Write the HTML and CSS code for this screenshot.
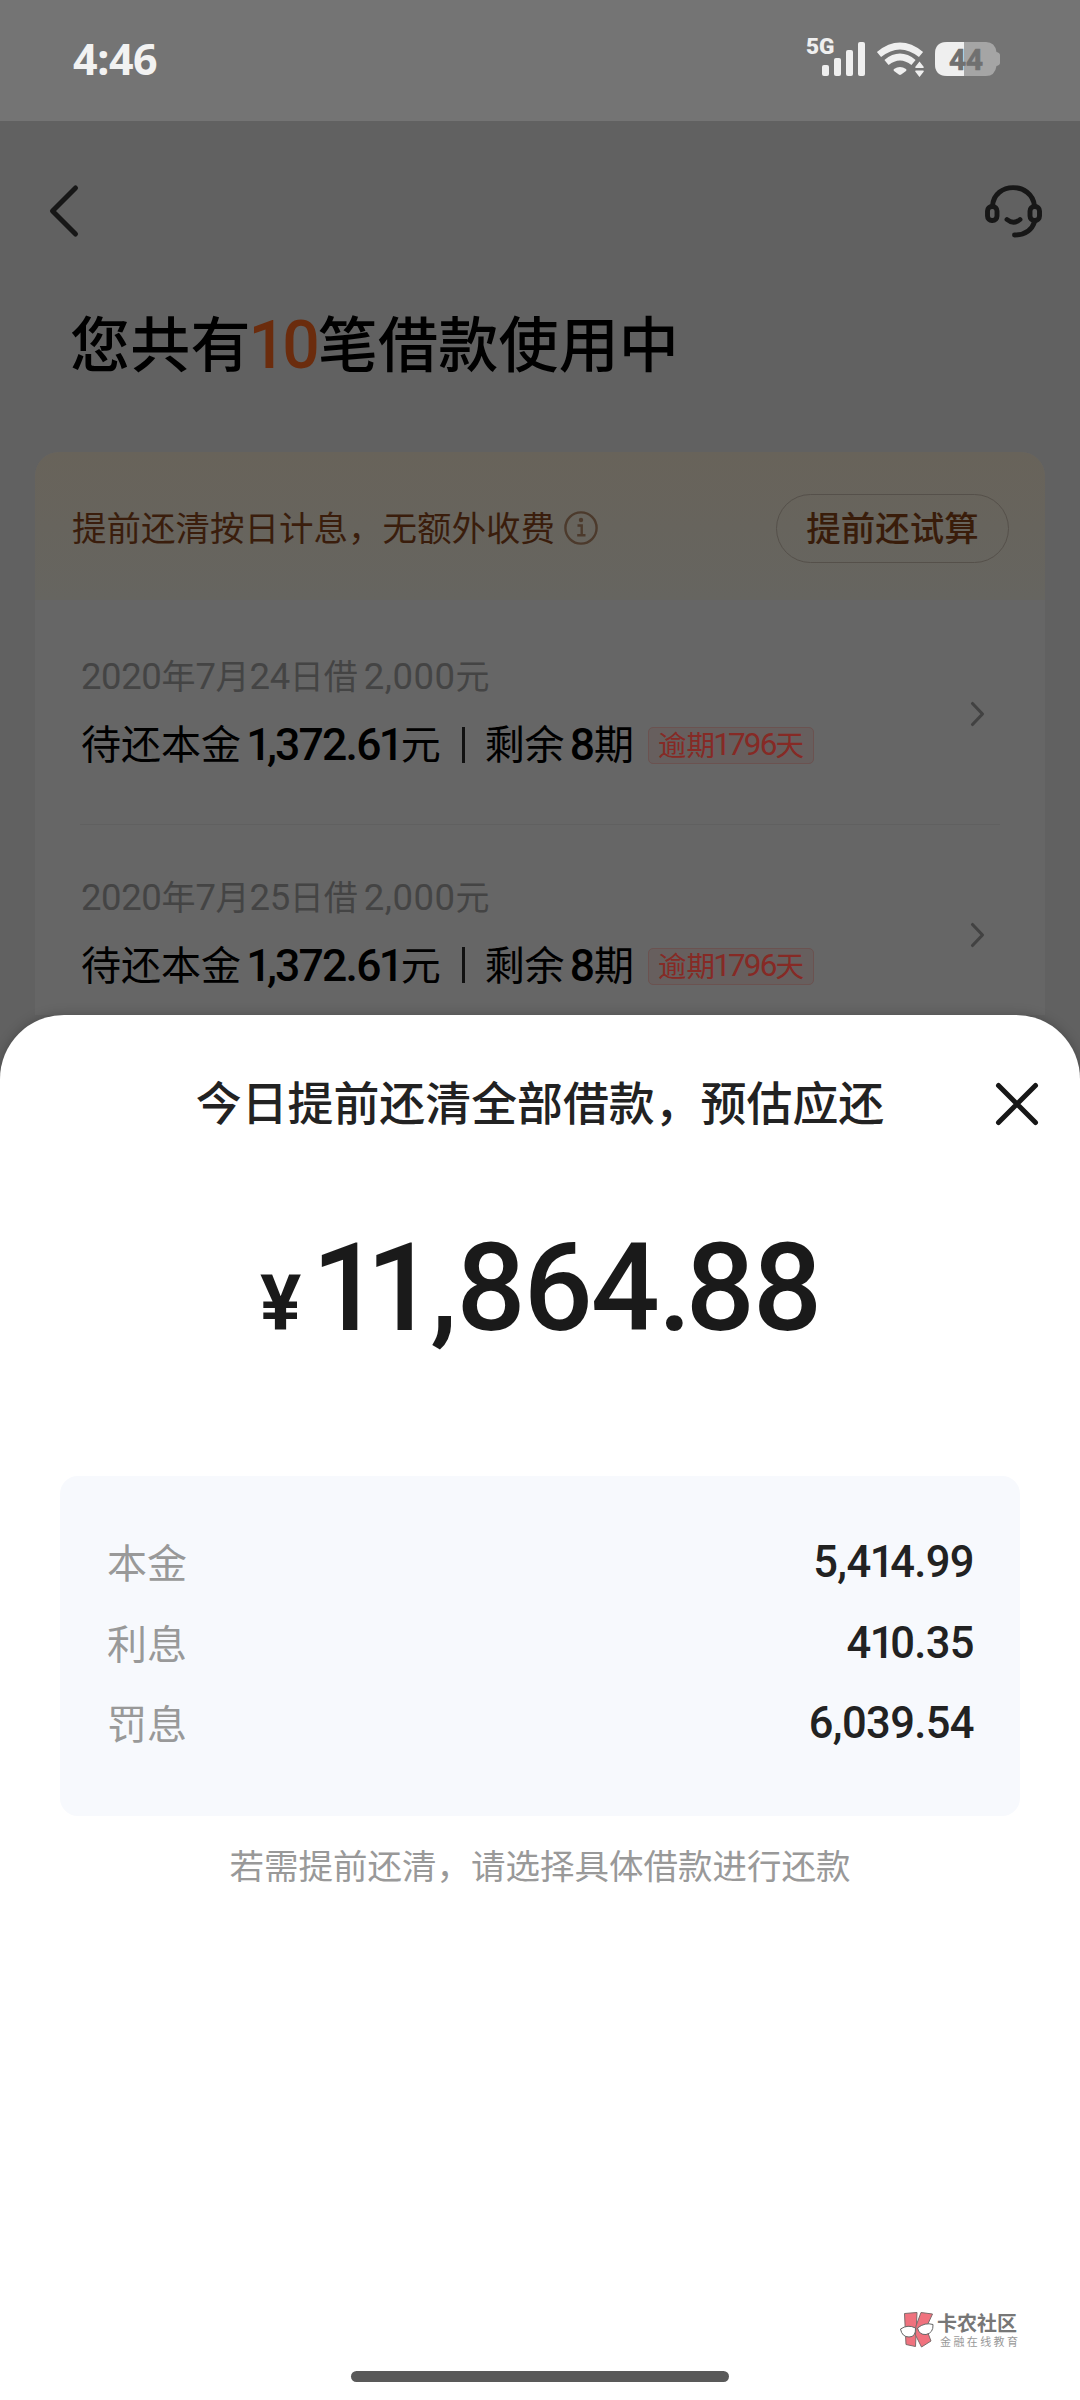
FILE: index.html
```html
<!DOCTYPE html>
<html lang="zh-CN">
<head>
<meta charset="utf-8">
<title>提前还清</title>
<link rel="stylesheet" href="styles.css">
</head>
<body>
<div class="screen">
  <header class="status">
    <span class="time">4:46</span>
    <svg class="status-icons" width="200" height="48" viewBox="804 34 200 48">
      <text class="net" x="806" y="53.5" textLength="28.5" lengthAdjust="spacingAndGlyphs">5G</text>
      <g fill="#efefef">
        <rect x="822" y="65" width="7" height="11" rx="2"/>
        <rect x="834" y="58" width="7" height="18" rx="2"/>
        <rect x="846" y="50" width="7" height="26" rx="2"/>
        <rect x="858" y="42" width="7" height="34" rx="2"/>
        <path d="M894 69 Q900 65 906 69 Q907 70 906 71 L901.2 74.5 Q900 75.4 898.8 74.5 L894 71 Q893 70 894 69Z"/>
        <path d="M919.5 61.5 L923.8 67 Q924 68 923 68 H916 Q915 68 915.2 67Z M919.5 77 L923.8 71.5 Q924 70.5 923 70.5 H916 Q915 70.5 915.2 71.5Z"/>
      </g>
      <g fill="none" stroke="#efefef" stroke-width="6.6">
        <path d="M879 54.5 Q900 37.5 921 54.5"/>
        <path d="M886.5 62.5 Q900 51.5 913.5 62.5"/>
      </g>
      <path d="M947 42h39q9 0 10.500 10q3.500 1 3.500 3v8q0 2-3.500 3q-1.500 10-10.500 10h-39q-12 0-12-12v-10q0-12 12-12z" fill="#a5a5a5"/>
      <path d="M964 42h-17q-12 0-12 12v10q0 12 12 12h17z" fill="#efefef"/>
      <text class="charge" x="949" y="69.500" textLength="34" lengthAdjust="spacingAndGlyphs">44</text>
    </svg>
  </header>

  <main class="page">
    <nav class="nav">
      <svg width="36" height="60" viewBox="0 0 36 60"><path d="M28.500 7 L5.500 30 L28.500 53" fill="none" stroke="#171717" stroke-width="5" stroke-linecap="round" stroke-linejoin="round"/></svg>
      <svg width="60" height="56" viewBox="984 182 60 56">
        <g fill="none" stroke="#171717" stroke-width="4.900" stroke-linecap="round">
          <path d="M992.500 205 C994 180.500 1032 180.500 1034.500 205"/>
          <rect x="987.500" y="205.500" width="9.500" height="14" rx="4.500"/>
          <rect x="1030" y="205.500" width="9.500" height="14" rx="4.500"/>
          <path d="M1007 218.500 Q1013.500 224 1020 218.500"/>
          <path d="M1034.500 221 Q1030 234 1014.500 234"/>
        </g>
      </svg>
    </nav>
    <h1 class="heading">您共有<span class="num count">10</span>笔借款使用中</h1>

    <section class="card">
      <div class="banner">
        <span class="banner-text">提前还清按日计息，无额外收费</span>
        <svg width="36" height="36" viewBox="0 0 36 36" fill="none" stroke="#4c3a2c" stroke-width="2.400"><circle cx="18" cy="18" r="15.600"/><path d="M14.500 15.500 H18.700 V25 M14.200 25.200 H22.500"/><circle cx="18" cy="10" r="1" fill="#4c3a2c"/></svg>
        <button class="trial"><span>提前还试算</span></button>
      </div>
      <ul class="loans">
        <li class="loan">
          <div class="loan-info">
            <p class="date"><span class="num">2020</span>年<span class="num">7</span>月<span class="num">24</span>日借<span class="num sum">2,000</span>元</p>
            <p class="due">待还本金<span class="num owed"><i>1</i>,372.6<i>1</i></span>元<span class="bar"></span>剩余<span class="num terms">8</span>期<span class="tag">逾期<span class="num days"><i>1</i>796</span>天</span></p>
          </div>
          <svg width="18" height="28" viewBox="0 0 18 28"><path d="M3.500 3.500 L13.500 14 L3.500 24.500" fill="none" stroke="#424242" stroke-width="3.100" stroke-linecap="round" stroke-linejoin="round"/></svg>
        </li>
        <li class="loan">
          <div class="loan-info">
            <p class="date"><span class="num">2020</span>年<span class="num">7</span>月<span class="num">25</span>日借<span class="num sum">2,000</span>元</p>
            <p class="due">待还本金<span class="num owed"><i>1</i>,372.6<i>1</i></span>元<span class="bar"></span>剩余<span class="num terms">8</span>期<span class="tag">逾期<span class="num days"><i>1</i>796</span>天</span></p>
          </div>
          <svg width="18" height="28" viewBox="0 0 18 28"><path d="M3.500 3.500 L13.500 14 L3.500 24.500" fill="none" stroke="#424242" stroke-width="3.100" stroke-linecap="round" stroke-linejoin="round"/></svg>
        </li>
      </ul>
    </section>
  </main>

  <section class="sheet">
    <div class="sheet-head">
      <h2>今日提前还清全部借款，预估应还</h2>
      <svg class="close" width="46" height="46" viewBox="0 0 46 46"><path d="M4.500 4.500 L41.500 41.500 M41.500 4.500 L4.500 41.500" stroke="#171717" stroke-width="5" stroke-linecap="round"/></svg>
    </div>
    <p class="amount"><span class="yen">¥</span><span class="total"><i>1</i><i>1</i><span class="comma">,</span>864<span class="point">.</span>88</span></p>
    <dl class="detail">
      <div><dt>本金</dt><dd>5,4<i>1</i>4.99</dd></div>
      <div><dt>利息</dt><dd>4<i>1</i>0.35</dd></div>
      <div><dt>罚息</dt><dd>6,039.54</dd></div>
    </dl>
    <p class="hint">若需提前还清，请选择具体借款进行还款</p>
    <div class="home-bar"></div>
  </section>

  <div class="watermark">
    <svg width="36" height="38" viewBox="0 0 36 38">
      <g fill="#f0727e" stroke="#7d6c6c" stroke-width="1"><path d="M5.500 2.500 L18 1.500 L16.500 35.500 L7 33.500Z"/><path d="M22 1.500 L33.500 3 L27 17 L32 30 L22.500 36 L16.500 24 L17 15Z"/></g>
      <path d="M1.500 18 Q9 13 16.500 17 Q17 26 10 26 Q3 26 1.500 18Z M18.500 17 Q26 11 34 13.500 Q34.500 22 27 23.500 Q20 24 18.500 17Z" fill="#fff" stroke="#666" stroke-width="1"/>
    </svg>
    <div class="brand"><strong>卡农社区</strong><small>金融在线教育</small></div>
  </div>
</div>
</body>
</html>
```
FILE: styles.css
```css
* { box-sizing: border-box; margin: 0; padding: 0; }
body { width: 1080px; font-family: "Noto Sans CJK SC", sans-serif; background: #fff; }
svg { display: block; flex: none; }
i { font-style: normal; letter-spacing: -0.1em; margin-left: -0.02em; }
.screen { position: relative; display: flex; flex-direction: column; width: 1080px; height: 2400px; overflow: hidden; background: #616161; }
.num { font-family: Roboto, sans-serif; line-height: 0; }

.status { display: flex; justify-content: space-between; align-items: center; height: 121px; padding: 0 76px 5px 73px; background: #747474; }
.time { font: 700 43px/60px "Noto Sans", sans-serif; letter-spacing: -0.4px; color: #f2f2f2; padding-top: 2px; }
.net { font: 900 22px Roboto, sans-serif; fill: #efefef; }
.charge { font: 700 30px Roboto, sans-serif; fill: #707070; stroke: #707070; stroke-width: 0.7px; }

.page { height: 894px; overflow: hidden; }
.nav { display: flex; justify-content: space-between; align-items: center; height: 180px; padding: 0 36px 0 47px; }
.heading { margin: -2px 0 0 70px; font-size: 60px; line-height: 84px; font-weight: 500; letter-spacing: 0.2px; color: #000; }
.count { margin: 0 2px 0 -2px; font-size: 66px; letter-spacing: -3.9px; color: #6b2c0d; vertical-align: -1px; }

.card { width: 1010px; height: 600px; margin: 69px auto 0; border-radius: 24px; background: #666; overflow: hidden; }
.banner { display: flex; align-items: center; height: 148px; padding: 4px 36px 0 37px; background: linear-gradient(#68635a, #666560); }
.banner-text { padding-bottom: 4px; margin-right: 8px; font-size: 34.5px; line-height: 50px; color: #3a1d0c; }
.trial { display: flex; align-items: center; justify-content: center; width: 233px; height: 69px; margin-left: auto; padding-bottom: 4px; border: 1px solid #55504a; border-radius: 35px; background: none; font: 500 34.5px/50px "Noto Sans CJK SC", sans-serif; color: #391c0a; }

.loans { list-style: none; padding: 4px 45px 0; }
.loan { display: flex; align-items: center; justify-content: space-between; height: 220px; padding: 0 13px 0 1px; }
.loan + .loan { border-top: 1px solid #606060; }
.loan-info { padding-bottom: 8px; }
.date { font-size: 34px; line-height: 60px; margin-bottom: 4px; color: #444; white-space: nowrap; }
.date .num { font-size: 36.5px; letter-spacing: -0.4px; }
.date .sum { margin-left: 6px; letter-spacing: 0.5px; }
.due { display: flex; align-items: center; height: 66px; font-size: 40px; line-height: 66px; color: #000; white-space: nowrap; }
.owed { position: relative; top: 3px; font-size: 44.5px; font-weight: 500; letter-spacing: -1.8px; margin: 0 1px 0 6px; }
.terms { position: relative; top: 3px; font-size: 44.5px; font-weight: 500; letter-spacing: -1px; margin: 0 0 0 5px; }
.bar { width: 3px; height: 36px; margin: 5px 20px 0 21px; background: #111; }
.tag { display: flex; align-items: center; height: 37px; margin: 7px 0 0 14px; padding: 0 9px 3px; border: 1px solid #6b5250; border-radius: 5px; background: #675f5e; font-size: 28.5px; line-height: 34px; color: #862a25; }
.days { font-size: 31.5px; letter-spacing: -1.8px; margin: 2px 0 0 -1px; }

.sheet { position: relative; display: flex; flex-direction: column; flex: 1; border-radius: 64px 64px 0 0; background: #fff; box-shadow: 0 0 12px rgba(0, 0, 0, 0.25); }
.sheet-head { display: grid; grid-template-columns: 127px 1fr 127px; align-items: center; justify-items: center; padding-top: 55px; }
.sheet-head h2 { grid-column: 2; font-size: 45.9px; line-height: 60px; font-weight: 500; color: #222; }
.close { margin-top: 8px; }
.amount { display: flex; justify-content: center; align-items: baseline; margin-top: 79px; height: 160px; font-family: Roboto, sans-serif; font-weight: 500; line-height: 160px; color: #1a1a1a; }
.yen { font-size: 77px; font-weight: 700; margin-right: 13px; }
.total { font-size: 121.5px; letter-spacing: -1.9px; }
.comma { margin: 0 1px 0 7px; }
.point { letter-spacing: -6px; }
.detail { width: 960px; height: 340px; margin: 107px auto 0; padding: 45px 46px 0 47px; border-radius: 18px; background: #f7f9fd; }
.detail div { display: flex; justify-content: space-between; align-items: center; height: 80.5px; }
.detail dt { font-size: 40px; line-height: 60px; color: #999; }
.detail dd { padding-top: 4px; font: 500 43.5px/60px Roboto, sans-serif; letter-spacing: -0.6px; color: #222; }
.hint { margin-top: 23px; text-align: center; font-size: 34.5px; line-height: 50px; color: #999; }
.home-bar { width: 378px; height: 11px; margin: auto auto 18px; border-radius: 6px; background: #595959; }

.watermark { position: absolute; left: 899px; top: 2311px; display: flex; gap: 2px; }
.brand { display: flex; flex-direction: column; }
.brand strong { font-size: 20px; line-height: 24px; font-weight: 700; color: #777; }
.brand small { padding-left: 3px; font-size: 11px; line-height: 12px; letter-spacing: 2.4px; color: #999; white-space: nowrap; }
```
